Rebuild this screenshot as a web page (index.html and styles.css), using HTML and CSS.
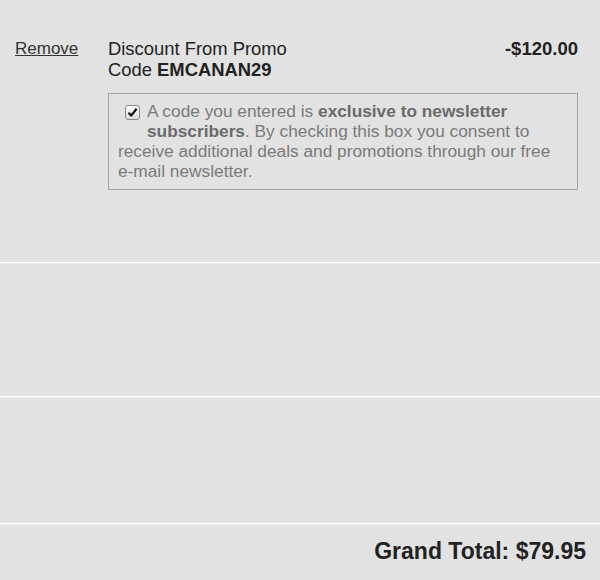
FILE: index.html
```html
<!DOCTYPE html>
<html>
<head>
<meta charset="utf-8">
<link rel="stylesheet" href="styles.css">
</head>
<body>
<div class="cart">
  <section class="row item">
    <a class="remove" href="#">Remove</a>
    <div class="detail">
      <div class="head">
        <div class="desc">Discount From Promo<br>Code <b>EMCANAN29</b></div>
        <div class="price">-$120.00</div>
      </div>
      <label class="consent">
        <span class="check"><svg width="11" height="11" viewBox="0 0 11 11"><path d="M1.5 5.8 L4.2 8.6 L9.6 1.8" fill="none" stroke="#111" stroke-width="2.2" stroke-linejoin="round"/></svg></span>A code you entered is <b>exclusive to newsletter subscribers</b>. By checking this box you consent to receive additional deals and promotions through our free e&#8209;mail newsletter.
      </label>
    </div>
  </section>
  <section class="row blank2"></section>
  <section class="row blank3"></section>
  <section class="total">Grand Total: $79.95</section>
</div>
</body>
</html>
```

FILE: styles.css
```css
html, body {
  margin: 0;
  padding: 0;
  background: #e2e2e2;
}
.cart {
  font-family: "Liberation Sans", Arial, sans-serif;
  color: #222;
  width: 600px;
}
.row {
  border-bottom: 1px solid #ffffff;
  box-shadow: 0 1px 0 #ececec;
  margin-bottom: 1px;
  box-sizing: border-box;
}
.item {
  display: flex;
  height: 263px;
  padding: 38px 22px 0 15px;
}
.remove {
  width: 93px;
  flex: none;
  font-size: 17px;
  line-height: 21px;
  color: #333;
  text-decoration: underline;
}
.detail {
  flex: 1;
}
.head {
  display: flex;
  justify-content: space-between;
  font-size: 18.4px;
  line-height: 21px;
}
.price {
  font-weight: bold;
  font-size: 18.5px;
}
.consent {
  display: block;
  margin-top: 13px;
  border: 1px solid #a3a3a3;
  padding: 7px 10px 8px 9px;
  font-size: 17.3px;
  line-height: 20px;
  color: #7a7a7a;
}
.consent b {
  color: #6a6a6a;
}
.check {
  float: left;
  width: 13px;
  height: 13px;
  margin: 4px 7px 20px 7px;
  border: 1px solid #8a8a8a;
  border-radius: 3px;
  background: linear-gradient(#fdfdfd, #dcdcdc);
  display: flex;
  align-items: center;
  justify-content: center;
}
.blank2 {
  height: 133px;
}
.blank3 {
  height: 126px;
}
.total {
  padding: 12px 14px 0 0;
  text-align: right;
  font-size: 23px;
  line-height: 28px;
  font-weight: bold;
  color: #222;
}
```
